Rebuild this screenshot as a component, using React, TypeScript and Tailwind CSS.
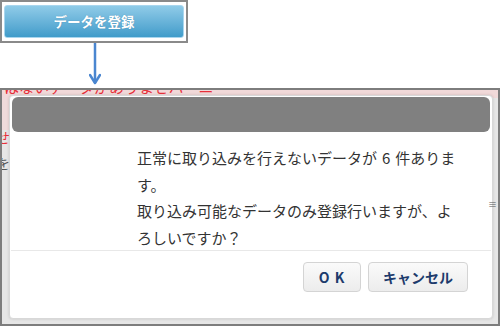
import React from "react";

export default function App() {
  const font = { fontFamily: '"Noto Sans CJK JP", "Noto Sans", sans-serif' };
  return (
    <div className="w-[500px] h-[327px] bg-white overflow-hidden flex flex-col" style={font}>
      {/* top button box */}
      <div className="w-[188px] h-[43px] border-2 border-[#8a8a8a] bg-white px-[2px] py-[3px]">
        <div className="w-full h-full rounded-[3px] border border-[#a9d6ee] bg-gradient-to-b from-[#8fcbe8] to-[#3f9cca] flex items-center justify-center text-white text-[13.5px] font-bold [text-shadow:0_0_1px_rgba(0,60,100,0.4)]">
          データを登録
        </div>
      </div>
      {/* arrow */}
      <div className="h-[45px] pl-[89px]">
        <svg width="12" height="45" viewBox="0 0 12 45">
          <line x1="6" y1="0" x2="6" y2="40" stroke="#4a86d0" strokeWidth="2.5" />
          <polyline points="1,32 6,40 11,32" fill="none" stroke="#4a86d0" strokeWidth="2.5" strokeLinecap="round" strokeLinejoin="round" />
        </svg>
      </div>
      {/* screenshot frame */}
      <div className="relative w-[500px] h-[238px] border-2 border-[#7d7d7d] bg-[#e6e6e6] overflow-hidden">
        <div className="h-[8px] bg-[#f1d9d9] overflow-hidden">
          <div className="-mt-[13px] pl-[2px] text-[15px] text-[#e8303a] whitespace-nowrap leading-[20px]">
            はないデータがありませハーニー
          </div>
        </div>
        <div className="flex h-full">
          <div className="w-[7px] flex flex-col text-[14px] leading-[14px] overflow-hidden">
            <div className="h-[32px] bg-[#efdada]" />
            <div className="text-[#e8303a] -ml-[6px]">せ</div>
            <div className="h-[12px]" />
            <div className="text-[#555] -ml-[6px]">を</div>
          </div>
        </div>
        {/* dialog */}
        <div className="absolute left-[7px] top-[5px] w-[484px] h-[224px] bg-white rounded-[4px] border border-[#d8d8d8] shadow-[0_0_3px_rgba(0,0,0,0.15)] flex flex-col px-[2px] pt-[1px]">
          <div className="h-[35px] bg-[#808080] rounded-[6px] shrink-0" />
          <div className="pl-[125px] pt-[13px] text-[15px] leading-[26.5px] text-[#333] h-[118px]">
            正常に取り込みを行えないデータが<span className="mx-[5px]">6</span>件ありま<br />
            す。<br />
            取り込み可能なデータのみ登録行いますが、よ<br />
            ろしいですか？
          </div>
          <div className="h-px bg-[#e8e8e8] mx-[-1px]" />
          <div className="flex justify-end gap-[7px] pr-[22px] pt-[11px]">
            <button className="w-[58px] h-[30px] rounded-[4px] border border-[#d4d4d4] bg-gradient-to-b from-[#fafafa] to-[#ececec] text-[14px] font-bold text-[#1d3b6c] tracking-[1px]">
              O K
            </button>
            <button className="w-[100px] h-[30px] rounded-[4px] border border-[#d4d4d4] bg-gradient-to-b from-[#fafafa] to-[#ececec] text-[14px] font-bold text-[#1d3b6c]">
              キャンセル
            </button>
          </div>
        </div>
        <div className="absolute right-[1px] top-[110px] text-[9px] text-[#555] leading-none">≡</div>
      </div>
    </div>
  );
}
